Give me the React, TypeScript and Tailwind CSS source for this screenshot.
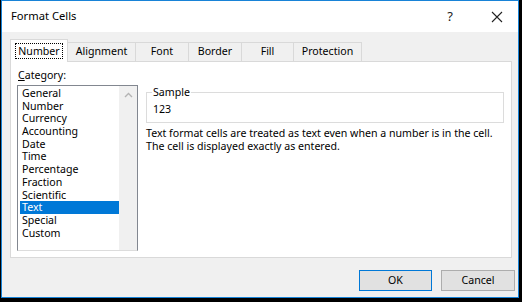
const tabs = [
  { label: 'Number', w: 'w-[58px]' },
  { label: 'Alignment', w: 'w-[68px]' },
  { label: 'Font', w: 'w-[53px]' },
  { label: 'Border', w: 'w-[53px]' },
  { label: 'Fill', w: 'w-[52px]' },
  { label: 'Protection', w: 'w-[68px]' },
]

const categories = [
  'General',
  'Number',
  'Currency',
  'Accounting',
  'Date',
  'Time',
  'Percentage',
  'Fraction',
  'Scientific',
  'Text',
  'Special',
  'Custom',
]

export default function App() {
  return (
    <div
      className="flex h-[302px] w-[522px] bg-black pb-[4px] pl-px pr-[3px] text-[10.6px] text-black"
      style={{ fontFamily: '"Noto Sans", "Liberation Sans", sans-serif' }}
    >
      <div className="flex flex-1 flex-col border border-[#1883d7] bg-[#f0f0f0]">
        {/* title bar */}
        <div className="flex h-[31px] items-center bg-white">
          <span className="pl-[9px] text-[11.2px]">Format Cells</span>
          <span className="ml-auto mr-[38px] text-[13px] text-[#222]">?</span>
          <svg width="12" height="12" viewBox="0 0 12 12" className="mr-[15px]">
            <path d="M1 1 L11 11 M11 1 L1 11" stroke="#222" strokeWidth="1.1" />
          </svg>
        </div>

        <div className="flex flex-1 flex-col pl-[8px] pt-[7px]">
          {/* tabs */}
          <div className="relative z-10 flex h-[22px] items-end">
            {tabs.map((t, i) =>
              i === 0 ? (
                <div
                  key={t.label}
                  className={`${t.w} -mb-px flex h-[23px] items-center justify-center border border-b-0 border-[#d9d9d9] bg-white`}
                >
                  <span className="border border-dotted border-black px-[2px] leading-[14px]">
                    {t.label}
                  </span>
                </div>
              ) : (
                <div
                  key={t.label}
                  className={`${t.w} flex h-[19px] items-center justify-center border border-b-0 border-l-0 border-[#d9d9d9] bg-[#f0f0f0]`}
                >
                  {t.label}
                </div>
              )
            )}
          </div>

          {/* panel */}
          <div className="flex h-[197px] w-[502px] border border-[#d9d9d9] bg-white pt-[7px]">
            <div className="flex flex-col">
              <div className="pl-[7px] leading-[12px]">
                <span className="underline">C</span>ategory:
              </div>
              <div className="ml-[6px] mt-[4px] flex h-[166px] w-[121px] border border-[#828790] border-b-[#dcdcdc]">
                <div className="flex flex-1 flex-col pl-[2px] pt-[1px]">
                  {categories.map((c) => (
                    <div
                      key={c}
                      className={`h-[12.7px] pl-[2px] leading-[12.7px] ${
                        c === 'Text' ? 'bg-[#0078d7] text-white' : ''
                      }`}
                    >
                      {c}
                    </div>
                  ))}
                </div>
                <div className="flex w-[18px] justify-center bg-[#f0f0f0] pt-[6px]">
                  <svg width="9" height="6" viewBox="0 0 9 6">
                    <path d="M1 5 L4.5 1.5 L8 5" stroke="#b4b4b4" strokeWidth="1.4" fill="none" />
                  </svg>
                </div>
              </div>
            </div>

            <div className="ml-[8px] flex flex-col pt-[17px]">
              <fieldset className="h-[37px] w-[358px] border border-[#dcdcdc] px-[5px]">
                <legend className="px-px leading-[12px]">Sample</legend>
                <div className="pl-[1px] pt-[5px] leading-[12px]">123</div>
              </fieldset>
              <div className="mt-[4px] leading-[13px]">
                <p>Text format cells are treated as text even when a number is in the cell.</p>
                <p>The cell is displayed exactly as entered.</p>
              </div>
            </div>
          </div>

          {/* buttons */}
          <div className="mt-[12px] flex w-[505px] justify-end gap-[9px]">
            <button className="h-[21px] w-[73px] border border-[#0078d7] bg-[#e1e1e1] text-[10.6px]">
              OK
            </button>
            <button className="h-[21px] w-[74px] border border-[#adadad] bg-[#e1e1e1] text-[10.6px]">
              Cancel
            </button>
          </div>
        </div>
      </div>
    </div>
  )
}
